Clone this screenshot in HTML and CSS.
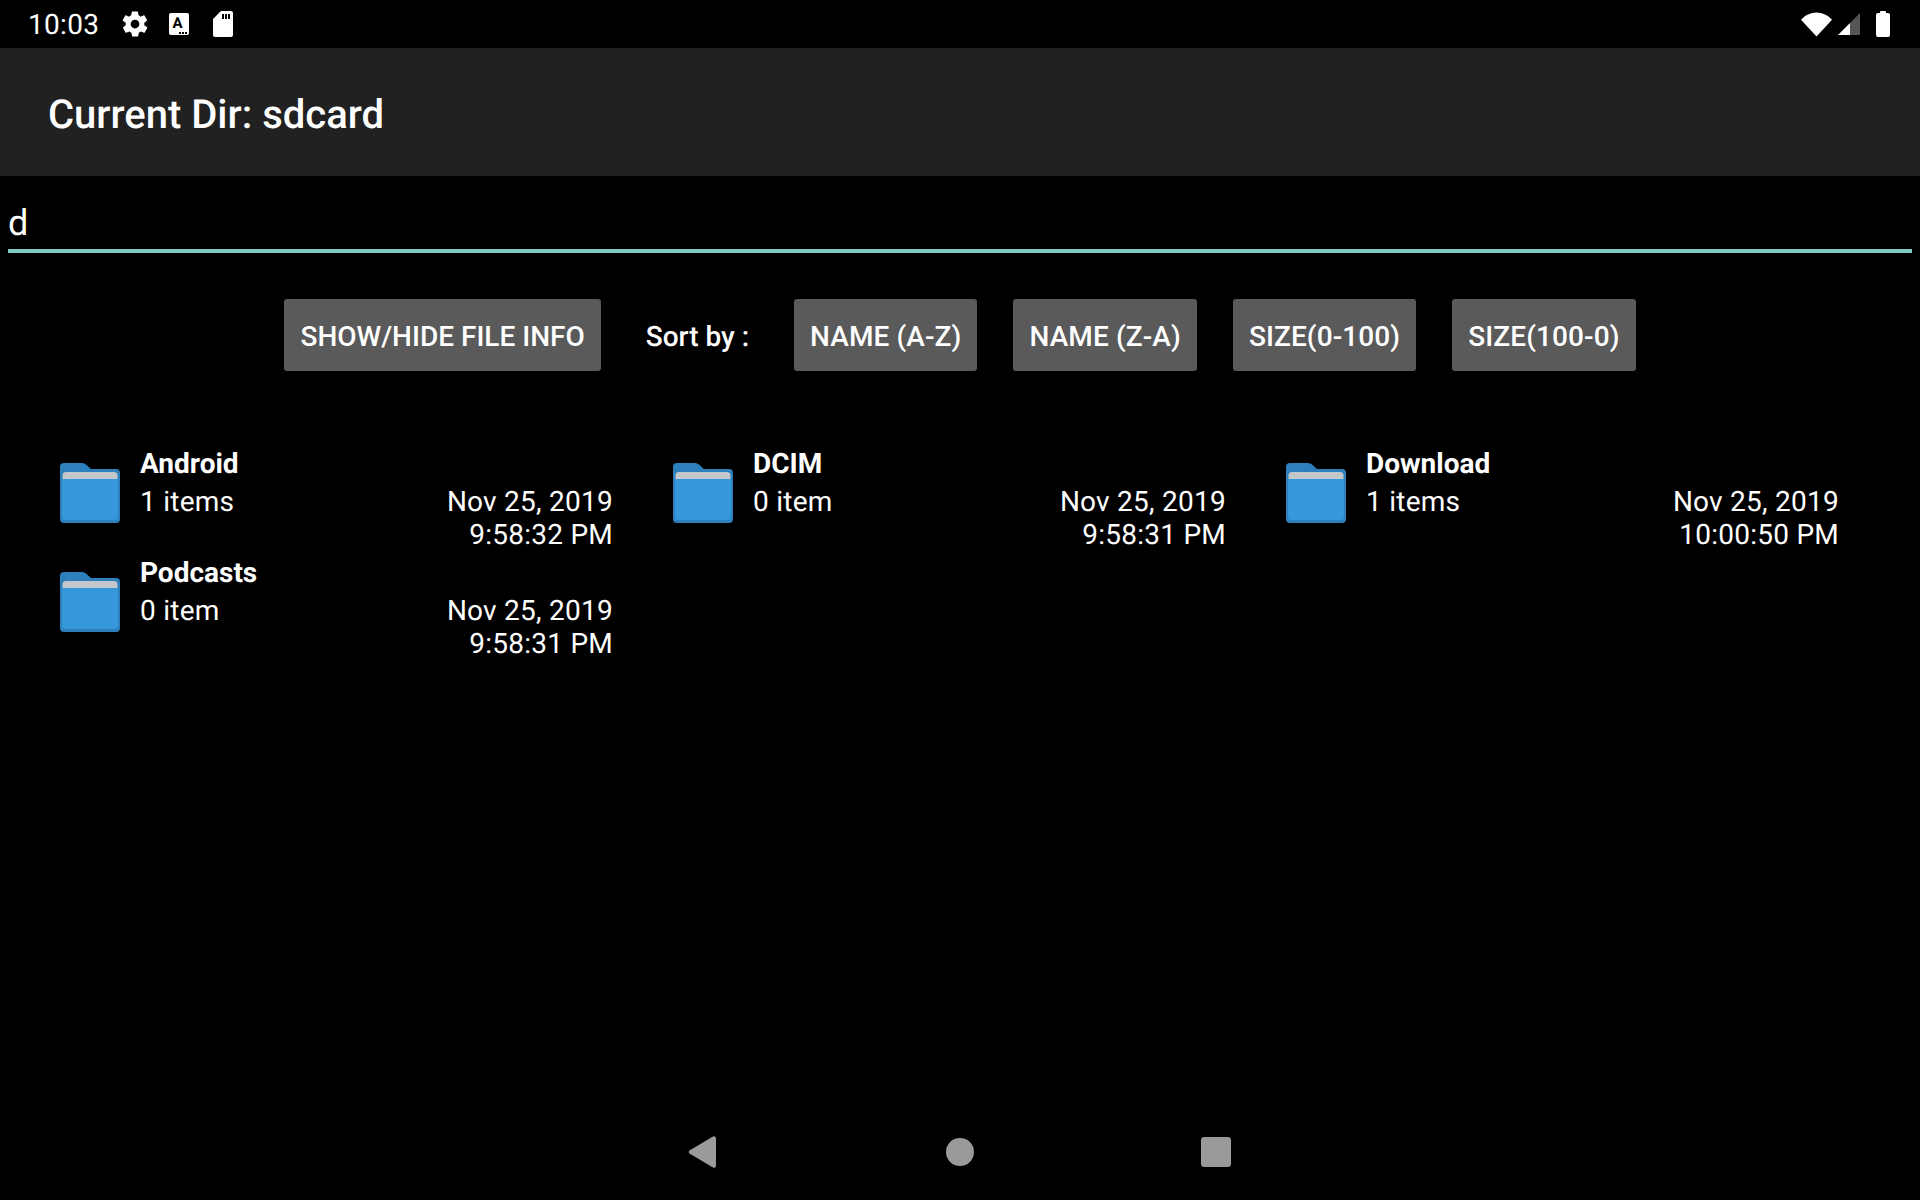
FILE: index.html
```html
<!DOCTYPE html>
<html>

<head>
  <meta charset="utf-8">
  <title>Current Dir: sdcard</title>
  <link rel="stylesheet" href="styles.css">
</head>

<body>
  <svg class="defs" width="0" height="0">
    <symbol id="folder" viewBox="0 0 60 60">
      <path d="M0 4a4 4 0 0 1 4-4h18a6 6 0 0 1 4 1.500l5 4.500h25a4 4 0 0 1 4 4V56a4 4 0 0 1-4 4H4a4 4 0 0 1-4-4z" fill="#2d80bb"/>
      <path d="M2.500 16v-3.500a3.500 3.500 0 0 1 3.500-3.500h48a3.500 3.500 0 0 1 3.500 3.500V16z" fill="#c3c7c9"/>
      <path d="M2 16h56v38a3 3 0 0 1-3 3H5a3 3 0 0 1-3-3z" fill="#3498db"/>
    </symbol>
  </svg>

  <div class="status-bar">
    <div class="status-left">
      <span class="clock">10:03</span>
      <svg class="gear" viewBox="0 0 24 24"><path fill="#fff" fill-rule="evenodd" d="M19.400 13a7.500 7.500 0 0 0 0-2l2.100-1.600a.5.5 0 0 0 .1-.6l-2-3.500a.5.5 0 0 0-.6-.2l-2.500 1a7.300 7.300 0 0 0-1.700-1l-.4-2.700a.5.5 0 0 0-.5-.4h-4a.5.5 0 0 0-.5.4l-.4 2.700a7.300 7.300 0 0 0-1.700 1l-2.500-1a.5.5 0 0 0-.6.2l-2 3.500a.5.5 0 0 0 .1.600L4.600 11a7.500 7.500 0 0 0 0 2l-2.100 1.600a.5.5 0 0 0-.1.600l2 3.500a.5.5 0 0 0 .6.200l2.500-1a7.300 7.300 0 0 0 1.700 1l.4 2.700a.5.5 0 0 0 .5.400h4a.5.5 0 0 0 .5-.4l.4-2.700a7.300 7.300 0 0 0 1.700-1l2.500 1a.5.5 0 0 0 .6-.2l2-3.500a.5.5 0 0 0-.1-.6zM12 15.500a3.500 3.500 0 1 1 0-7 3.500 3.500 0 0 1 0 7z"/></svg>
      <span class="a-icon">A<i class="a-dots"></i></span>
      <svg class="sd" viewBox="0 0 20 26"><path fill="#fff" fill-rule="evenodd" d="M8 0h10a2 2 0 0 1 2 2v22a2 2 0 0 1-2 2H2a2 2 0 0 1-2-2V8zM9 3v5h2V3zm3 0v5h2V3zm3 0v5h2V3z"/></svg>
    </div>
    <div class="status-right">
      <svg class="wifi" viewBox="0 0 32 25"><path fill="#fff" d="M0 7.500C4 3 10 0 16 0s12 3 16 7.500L16 25z"/></svg>
      <svg class="signal" viewBox="0 0 22 22"><path fill="#fff" d="M0 22 12 10v12z"/><path fill="#555" d="M12 10 22 0v22H12z"/></svg>
      <svg class="battery" viewBox="0 0 14 26"><path fill="#fff" d="M4 2V1a1 1 0 0 1 1-1h4a1 1 0 0 1 1 1v1h2a2 2 0 0 1 2 2v20a2 2 0 0 1-2 2H2a2 2 0 0 1-2-2V4a2 2 0 0 1 2-2z"/></svg>
    </div>
  </div>

  <div class="toolbar">Current Dir: sdcard</div>

  <div class="search">d</div>

  <div class="actions">
    <button class="btn btn-info">SHOW/HIDE FILE INFO</button>
    <span class="sort-label">Sort by :</span>
    <button class="btn btn-sort">NAME (A-Z)</button>
    <button class="btn btn-sort">NAME (Z-A)</button>
    <button class="btn btn-sort">SIZE(0-100)</button>
    <button class="btn btn-sort">SIZE(100-0)</button>
  </div>

  <div class="files">
    <div class="file">
      <svg class="folder"><use href="#folder"/></svg>
      <div class="file-info">
        <div class="file-name">Android</div>
        <div class="file-meta">
          <span class="file-count">1 items</span>
          <span class="file-date">Nov 25, 2019<br>9:58:32 PM</span>
        </div>
      </div>
    </div>
    <div class="file">
      <svg class="folder"><use href="#folder"/></svg>
      <div class="file-info">
        <div class="file-name">DCIM</div>
        <div class="file-meta">
          <span class="file-count">0 item</span>
          <span class="file-date">Nov 25, 2019<br>9:58:31 PM</span>
        </div>
      </div>
    </div>
    <div class="file">
      <svg class="folder"><use href="#folder"/></svg>
      <div class="file-info">
        <div class="file-name">Download</div>
        <div class="file-meta">
          <span class="file-count">1 items</span>
          <span class="file-date">Nov 25, 2019<br>10:00:50 PM</span>
        </div>
      </div>
    </div>
    <div class="file">
      <svg class="folder"><use href="#folder"/></svg>
      <div class="file-info">
        <div class="file-name">Podcasts</div>
        <div class="file-meta">
          <span class="file-count">0 item</span>
          <span class="file-date">Nov 25, 2019<br>9:58:31 PM</span>
        </div>
      </div>
    </div>
  </div>

  <div class="nav-bar">
    <svg class="nav-back" viewBox="0 0 28 32"><path fill="#9a9a9a" d="M1.500 14.500 25 .5a2 2 0 0 1 3 1.500v28a2 2 0 0 1-3 1.500L1.500 17.500a1.800 1.800 0 0 1 0-3z"/></svg>
    <span class="nav-home"></span>
    <span class="nav-recent"></span>
  </div>
</body>

</html>
```

FILE: styles.css
```css
* {
  padding: 0px;
  margin: 0px;
  box-sizing: border-box;
}

html,
body {
  height: 100%;
}

body {
  background-color: #000;
  color: #fff;
  font-family: Roboto, "Liberation Sans", sans-serif;
  text-rendering: geometricPrecision;
  display: flex;
  flex-direction: column;
  overflow: hidden;
}

.defs {
  position: absolute;
}

.status-bar {
  height: 48px;
  padding: 0 30px 0 28px;
  display: flex;
  justify-content: space-between;
  align-items: center;
  flex-shrink: 0;
}

.status-left,
.status-right {
  display: flex;
  align-items: center;
}

.clock {
  font-size: 28px;
  letter-spacing: 0.3px;
  width: 94px;
}

.gear {
  width: 30px;
  height: 30px;
  margin-left: -2px;
  margin-right: 19px;
}

.a-icon {
  position: relative;
  width: 20px;
  height: 22px;
  margin-right: 24px;
  padding-right: 3px;
  background-color: #fff;
  border-radius: 2px;
  color: #000;
  font-size: 15px;
  font-weight: 700;
  line-height: 20px;
  text-align: center;
}

.a-dots {
  position: absolute;
  right: 2px;
  bottom: 1px;
  width: 8px;
  height: 2px;
  background-image: repeating-linear-gradient(90deg, #000 0 2px, #fff 2px 3px);
}

.sd {
  width: 20px;
  height: 26px;
}

.wifi {
  width: 31px;
  height: 25px;
  margin-right: 6px;
}

.signal {
  width: 22px;
  height: 22px;
  margin-right: 16px;
}

.battery {
  width: 14px;
  height: 26px;
}

.toolbar {
  height: 128px;
  flex-shrink: 0;
  background-color: #212121;
  padding: 4px 0 0 48px;
  display: flex;
  align-items: center;
  font-size: 40px;
  font-weight: 500;
}

.search {
  height: 77px;
  margin: 0 8px;
  border-bottom: 4px solid #80cbc4;
  font-size: 36px;
  line-height: 95px;
}

.actions {
  display: flex;
  align-items: center;
  justify-content: center;
  margin-top: 46px;
  gap: 36px;
}

.btn {
  height: 72px;
  padding: 2px 16px 0;
  border: none;
  border-radius: 3px;
  background-color: #5a5a5b;
  color: #fff;
  font-family: inherit;
  font-size: 28px;
  font-weight: 500;
}

.btn-sort {
  letter-spacing: 0.1px;
}

.sort-label {
  margin: 2px 9px 0;
  font-size: 28px;
  font-weight: 500;
}

.files {
  display: grid;
  grid-template-columns: repeat(3, 613px);
  padding-left: 60px;
  margin-top: 76px;
}

.file {
  display: flex;
  height: 109px;
}

.folder {
  width: 60px;
  height: 60px;
  margin-top: 16px;
  margin-right: 20px;
  flex-shrink: 0;
}

.file-info {
  width: 473px;
}

.file-name {
  font-size: 28px;
  font-weight: 700;
  line-height: 34px;
}

.file-meta {
  display: flex;
  justify-content: space-between;
  font-size: 28px;
  letter-spacing: 0.25px;
  line-height: 33px;
  margin-top: 2px;
}

.file-count {
  padding-top: 2px;
}

.file-date {
  text-align: right;
  padding-top: 2px;
}

.nav-bar {
  margin-top: auto;
  height: 96px;
  flex-shrink: 0;
  display: flex;
  align-items: center;
  justify-content: center;
  gap: 229px;
  padding-right: 2px;
}

.nav-back {
  width: 28px;
  height: 32px;
}

.nav-home {
  width: 28px;
  height: 28px;
  margin-left: 1px;
  border-radius: 50%;
  background-color: #9a9a9a;
}

.nav-recent {
  width: 30px;
  height: 30px;
  margin-left: -2px;
  border-radius: 3px;
  background-color: #9a9a9a;
}
```
